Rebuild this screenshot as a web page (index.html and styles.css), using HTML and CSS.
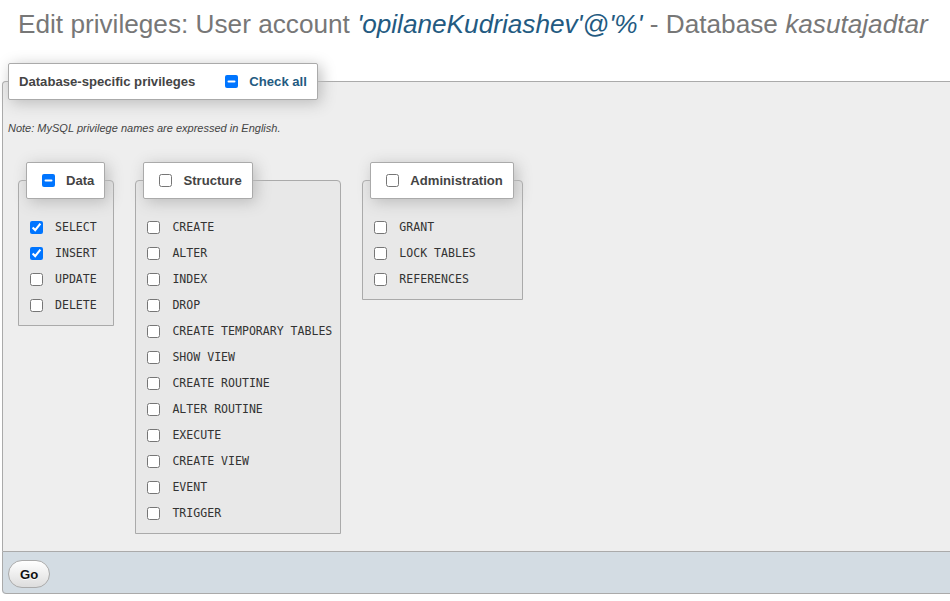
FILE: index.html
```html
<!DOCTYPE html>
<html lang="en">
<head>
<meta charset="utf-8">
<title>Edit privileges</title>
<link rel="stylesheet" href="styles.css">
</head>
<body>
<h2 class="title">Edit privileges: User account <i class="acct">'opilaneKudriashev'@'%'</i> - Database <i>kasutajadtar</i></h2>
<form class="privs">
  <fieldset class="main">
    <legend class="main-legend">
      <span class="legend-text">Database-specific privileges</span>
      <label class="checkall"><input type="checkbox" class="indet"><span>Check all</span></label>
    </legend>
    <p class="note">Note: MySQL privilege names are expressed in English.</p>
    <div class="groups">
      <fieldset class="group">
        <legend class="group-legend"><input type="checkbox" class="indet"><span>Data</span></legend>
        <label class="item"><input type="checkbox" checked><code>SELECT</code></label>
        <label class="item"><input type="checkbox" checked><code>INSERT</code></label>
        <label class="item"><input type="checkbox"><code>UPDATE</code></label>
        <label class="item"><input type="checkbox"><code>DELETE</code></label>
      </fieldset>
      <fieldset class="group">
        <legend class="group-legend"><input type="checkbox"><span>Structure</span></legend>
        <label class="item"><input type="checkbox"><code>CREATE</code></label>
        <label class="item"><input type="checkbox"><code>ALTER</code></label>
        <label class="item"><input type="checkbox"><code>INDEX</code></label>
        <label class="item"><input type="checkbox"><code>DROP</code></label>
        <label class="item"><input type="checkbox"><code>CREATE TEMPORARY TABLES</code></label>
        <label class="item"><input type="checkbox"><code>SHOW VIEW</code></label>
        <label class="item"><input type="checkbox"><code>CREATE ROUTINE</code></label>
        <label class="item"><input type="checkbox"><code>ALTER ROUTINE</code></label>
        <label class="item"><input type="checkbox"><code>EXECUTE</code></label>
        <label class="item"><input type="checkbox"><code>CREATE VIEW</code></label>
        <label class="item"><input type="checkbox"><code>EVENT</code></label>
        <label class="item"><input type="checkbox"><code>TRIGGER</code></label>
      </fieldset>
      <fieldset class="group">
        <legend class="group-legend"><input type="checkbox"><span>Administration</span></legend>
        <label class="item"><input type="checkbox"><code>GRANT</code></label>
        <label class="item"><input type="checkbox"><code>LOCK TABLES</code></label>
        <label class="item"><input type="checkbox"><code>REFERENCES</code></label>
      </fieldset>
    </div>
  </fieldset>
  <fieldset class="footer">
    <button type="button" class="go">Go</button>
  </fieldset>
</form>
<script src="script.js"></script>
</body>
</html>
```

FILE: styles.css
```css
html, body {
  margin: 0;
  padding: 0;
  background: #fff;
  overflow: hidden;
}
body {
  font-family: "Liberation Sans", Arial, sans-serif;
  font-size: 13.12px;
  color: #444;
}
.title {
  margin: 0;
  padding: 9px 0 0 18px;
  font-size: 26.2px;
  line-height: 30px;
  font-weight: normal;
  color: #777;
  white-space: nowrap;
}
.title .acct {
  color: #235a81;
}
.privs {
  margin: 24px -60px 0 2px;
}
.main {
  margin: 0;
  padding: 0 5px 7px 5px;
  border: 1px solid #aaa;
  border-bottom: none;
  border-radius: 4px 4px 0 0;
  background: #eee;
  min-width: 0;
}
.main-legend {
  box-sizing: border-box;
  height: 37px;
  display: flex;
  align-items: center;
  padding: 0 10px;
  background: #fff;
  border: 1px solid #aaa;
  border-radius: 2px;
  box-shadow: 3px 3px 15px #bbb;
  font-weight: bold;
  color: #444;
}
.checkall {
  display: flex;
  align-items: center;
  margin-left: 26px;
  color: #235a81;
}
.checkall span {
  margin-left: 8px;
}
.note {
  margin: 22px 0 0;
  font-size: 11px;
  line-height: 12px;
  font-style: italic;
  color: #444;
}
.groups {
  display: flex;
  align-items: flex-start;
  gap: 21px;
  margin: 28px 0 10px 10px;
}
.group {
  margin: 0;
  padding: 15px 8px 7px 7px;
  border: 1px solid #aaa;
  border-radius: 4px 4px 0 0;
  background: #e8e8e8;
  display: flex;
  flex-direction: column;
}
.group-legend {
  box-sizing: border-box;
  height: 37px;
  display: flex;
  align-items: center;
  padding: 0 10px 0 11px;
  background: #fff;
  border: 1px solid #aaa;
  border-radius: 2px;
  box-shadow: 3px 3px 15px #bbb;
  font-weight: bold;
  color: #444;
}
.group-legend span {
  margin-left: 8px;
}
.item {
  display: flex;
  align-items: center;
  height: 26px;
  white-space: nowrap;
}
.item code {
  margin-left: 9px;
  font-family: "DejaVu Sans Mono", "Liberation Mono", monospace;
  font-size: 11.55px;
  color: #333;
}
input[type="checkbox"] {
  width: 13px;
  height: 13px;
  margin: 3px 3px 3px 4px;
}
.footer {
  margin: 0;
  padding: 8px 5px 5px;
  border: 1px solid #aaa;
  border-radius: 0 0 4px 4px;
  background: #d3dce3;
  min-width: 0;
}
.go {
  height: 28px;
  padding: 0 11px;
  border: 1px solid #aaa;
  border-radius: 14px;
  background: linear-gradient(#fff, #ddd);
  font-family: "Liberation Sans", Arial, sans-serif;
  font-size: 13.12px;
  font-weight: bold;
  color: #111;
  text-shadow: 0 1px 0 #fff;
}
```

FILE: script.js
```js
document.querySelectorAll('.indet').forEach(function (el) {
  el.indeterminate = true;
});
```
